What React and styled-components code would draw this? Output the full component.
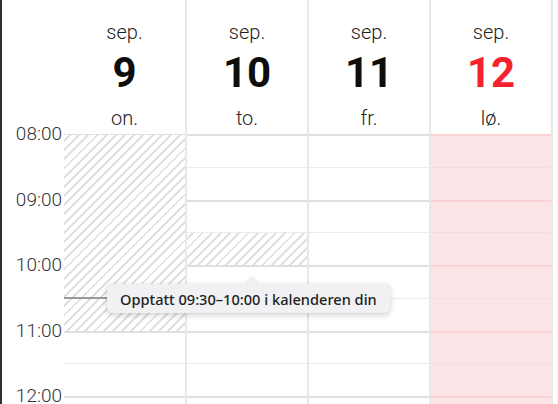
import React from "react";
import styled, { createGlobalStyle } from "styled-components";

const HOUR = 65.5;
const START = 8;

const days = [
  { month: "sep.", date: 9, weekday: "on.", busy: [[8, 11]], nowLine: 10.5 },
  { month: "sep.", date: 10, weekday: "to.", busy: [[9.5, 10]] },
  { month: "sep.", date: 11, weekday: "fr.", busy: [] },
  { month: "sep.", date: 12, weekday: "lø.", busy: [], holiday: true },
];

const hours = ["08:00", "09:00", "10:00", "11:00", "12:00"];
const slots = Array.from({ length: 10 }, (_, i) => i);

const GlobalStyle = createGlobalStyle`
  html, body {
    margin: 0;
    padding: 0;
    background: #fff;
    overflow: hidden;
  }
  body {
    font-family: Roboto, "Liberation Sans", sans-serif;
  }
`;

const App = () => {
  return (
    <>
      <GlobalStyle />
      <Page>
        <TimeColumn>
          <HeaderSpacer />
          {hours.map((h) => (
            <TimeRow key={h}>
              <TimeLabel>{h}</TimeLabel>
            </TimeRow>
          ))}
        </TimeColumn>
        {days.map((day, i) => (
          <DayColumn key={day.date} $first={i === 0}>
            <DayHeader>
              <Month>{day.month}</Month>
              <DateNum $holiday={day.holiday}>{day.date}</DateNum>
              <Weekday>{day.weekday}</Weekday>
            </DayHeader>
            <DayBody $holiday={day.holiday}>
              {slots.map((s) => (
                <Slot key={s} $hour={s % 2 === 0} $holiday={day.holiday} />
              ))}
              {day.busy.map(([from, to]) => (
                <Busy
                  key={from}
                  style={{
                    top: (from - START) * HOUR + 1,
                    height: (to - from) * HOUR - 1,
                  }}
                />
              ))}
              {day.nowLine && (
                <NowLine style={{ top: (day.nowLine - START) * HOUR }} />
              )}
            </DayBody>
          </DayColumn>
        ))}
        <Tooltip>Opptatt 09:30–10:00 i kalenderen din</Tooltip>
      </Page>
    </>
  );
};

export default App;

const Page = styled.div`
  position: relative;
  display: flex;
  width: 558px;
  height: 404px;
  border-left: 2px solid #2d3136;
  box-sizing: border-box;
  overflow: hidden;
`;

const TimeColumn = styled.div`
  width: 62px;
  flex-shrink: 0;
`;

const HeaderSpacer = styled.div`
  height: 134px;
`;

const TimeRow = styled.div`
  position: relative;
  height: ${HOUR}px;
`;

const TimeLabel = styled.div`
  position: absolute;
  right: 2px;
  top: -11px;
  font-size: 19px;
  line-height: 22px;
  color: #333;
  font-weight: 300;
`;

const DayColumn = styled.div`
  width: ${(p) => (p.$first ? "121px" : "120px")};
  flex-shrink: 0;
  border-right: 2px solid #e8e8e8;
  display: flex;
  flex-direction: column;
`;

const DayHeader = styled.div`
  height: 134px;
  flex-shrink: 0;
  display: flex;
  flex-direction: column;
  align-items: center;
`;

const Month = styled.div`
  margin-top: 20px;
  font-size: 20px;
  line-height: 24px;
  font-weight: 300;
  color: #222;
`;

const DateNum = styled.div`
  margin-top: 6px;
  font-size: 42px;
  line-height: 46px;
  font-weight: 700;
  color: ${(p) => (p.$holiday ? "#f5222d" : "#0d0d0d")};
`;

const Weekday = styled.div`
  margin-top: 10px;
  font-size: 20px;
  line-height: 24px;
  font-weight: 300;
  color: #222;
`;

const DayBody = styled.div`
  position: relative;
  flex: 1;
  background: ${(p) => (p.$holiday ? "#fde5e7" : "#fff")};
`;

const Slot = styled.div`
  height: ${HOUR / 2}px;
  box-sizing: border-box;
  border-top: ${(p) => (p.$hour ? "2px" : "1px")} solid
    ${(p) =>
      p.$holiday
        ? p.$hour
          ? "#fbd3d6"
          : "#f9dcdf"
        : p.$hour
        ? "#e0e0e0"
        : "#ececec"};
`;

const Busy = styled.div`
  position: absolute;
  left: 0;
  right: 0;
  background: repeating-linear-gradient(
    -45deg,
    #fff 0px,
    #fff 4.5px,
    #e0e0e0 4.5px,
    #e0e0e0 6.5px
  );
`;

const NowLine = styled.div`
  position: absolute;
  left: 0;
  right: 0;
  height: 2px;
  margin-top: -1px;
  background: #9a9a9a;
`;

const Tooltip = styled.div`
  position: absolute;
  left: 105px;
  top: 284px;
  height: 29px;
  padding: 0 13px;
  display: flex;
  align-items: center;
  background: #f1f1f3;
  border-radius: 5px;
  box-shadow: 0 2px 6px rgba(0, 0, 0, 0.18), 0 0 1px rgba(0, 0, 0, 0.15);
  font-family: "Noto Sans", "Open Sans", sans-serif;
  font-size: 14.6px;
  font-weight: 500;
  color: #222;
  white-space: nowrap;

  &::before {
    content: "";
    position: absolute;
    left: 140px;
    top: -5px;
    width: 10px;
    height: 10px;
    background: #f1f1f3;
    transform: rotate(45deg);
    box-shadow: -1px -1px 2px rgba(0, 0, 0, 0.07);
  }
`;
